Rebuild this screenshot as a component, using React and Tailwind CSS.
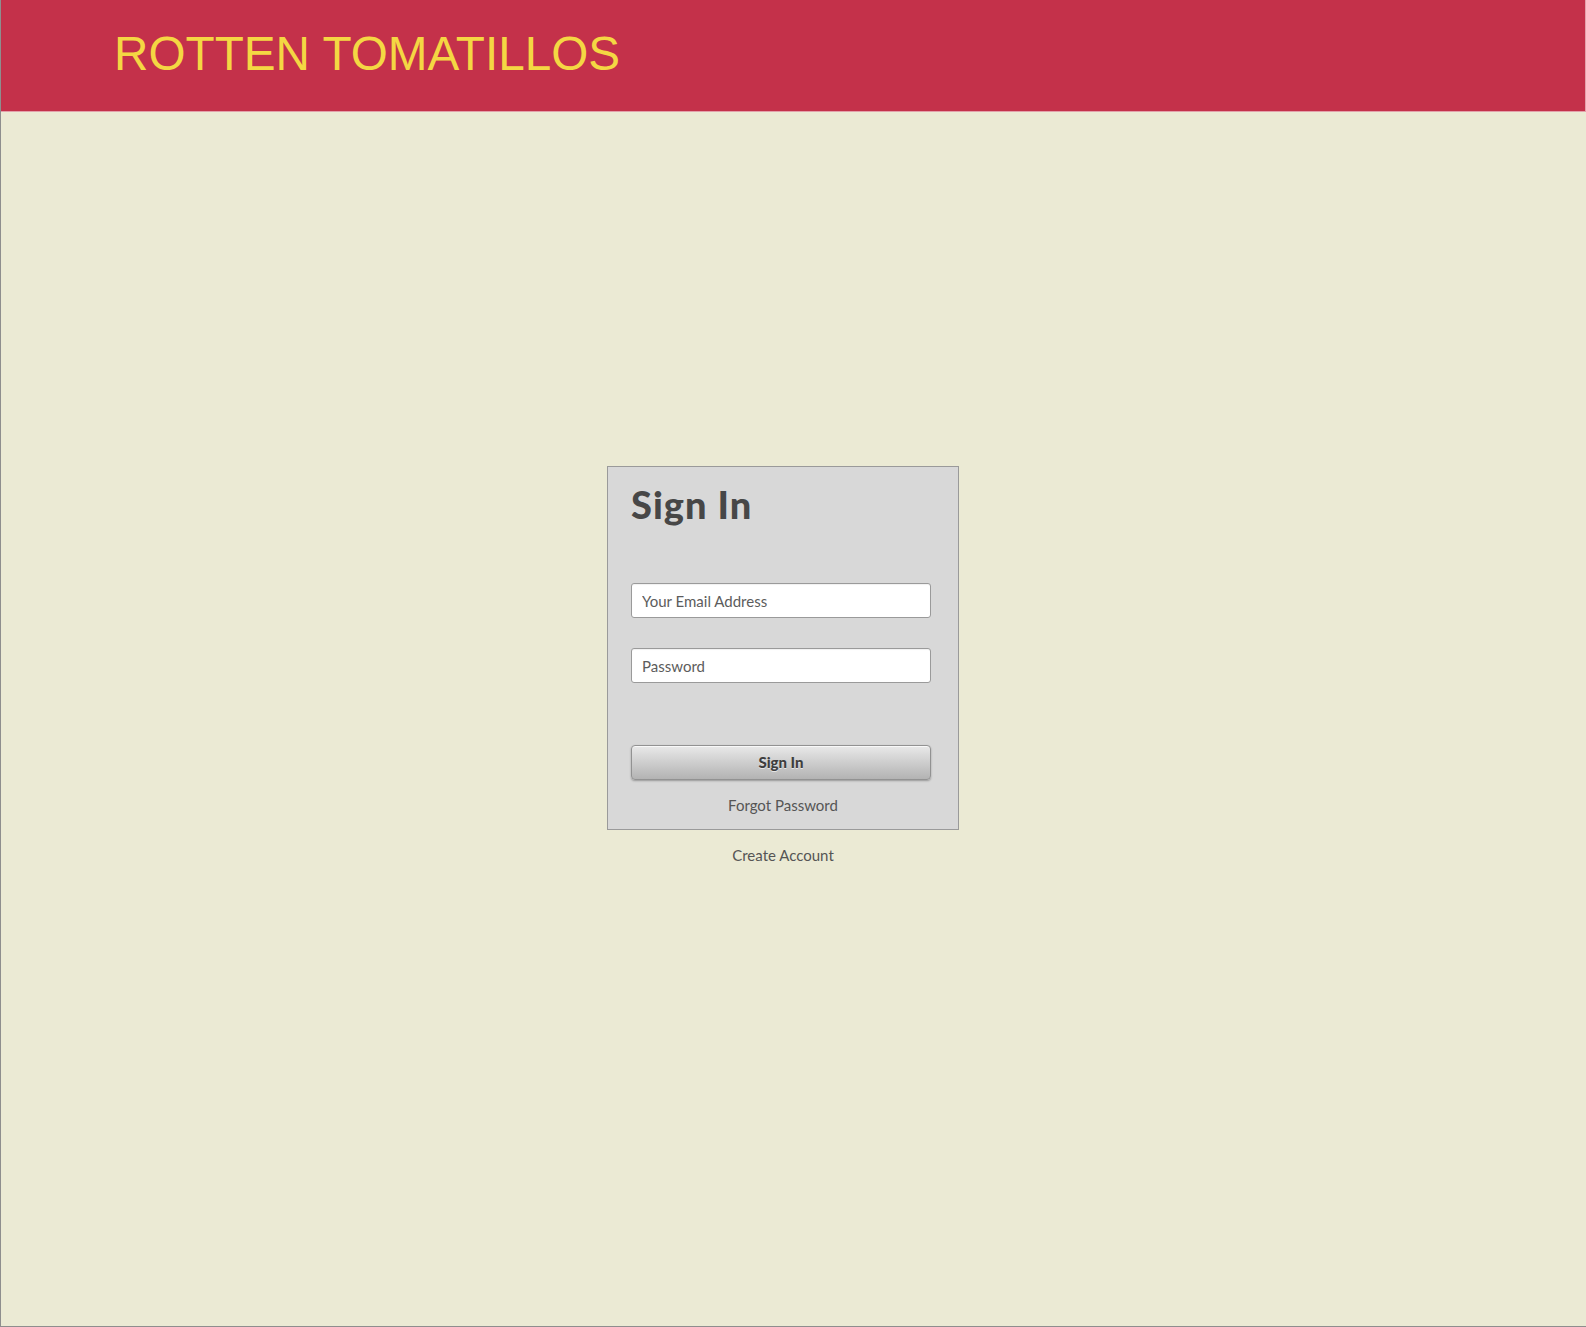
import React from 'react';

/**
 * Rotten Tomatillos sign-in page: red banner on top, grey card centred on a cream page.
 */
function TextField({ placeholder, type = 'text' }) {
  return (
    <input
      type={type}
      placeholder={placeholder}
      className="block w-[300px] h-[35px] px-[10px] bg-white border border-[#9a9a9a] rounded-[3px] text-[15px] text-[#444] placeholder:text-[#5c5c5c] outline-none shadow-[inset_0_1px_1px_rgba(0,0,0,0.06)]"
    />
  );
}

export default function App() {
  return (
    <div
      className="w-[1586px] h-[1327px] flex flex-col bg-[#ebead4] border-l border-b border-[#8e8e8e]"
      style={{ fontFamily: 'Lato, "Open Sans", sans-serif' }}
    >
      {/* Banner */}
      <header className="h-[112px] shrink-0 bg-[#c4314a] border-b border-r border-[#e3a1ab] pl-[113px] pt-[26px]">
        <h1
          className="text-[47.7px] leading-[55px] text-[#f4d743] font-normal"
          style={{ fontFamily: '"Liberation Sans", Arial, sans-serif' }}
        >
          ROTTEN TOMATILLOS
        </h1>
      </header>

      {/* Sign-in area */}
      <main className="flex-1 flex flex-col items-center pt-[354px] pr-[21px]">
        <div className="w-[352px] bg-[#d8d8d8] border border-[#9a9a9a] px-[23px] pt-[15px] pb-[14px]">
          <h2 className="text-[38px] leading-[44px] font-black tracking-[1px] text-[#474747]">Sign In</h2>

          <div className="mt-[57px] flex flex-col gap-[30px]">
            <TextField placeholder="Your Email Address" type="email" />
            <TextField placeholder="Password" type="password" />
          </div>

          <button
            type="button"
            className="mt-[62px] w-[300px] h-[35px] rounded-[4px] border border-[#929292] bg-gradient-to-b from-[#e9e9e9] to-[#b3b3b3] shadow-[0_1px_2px_rgba(0,0,0,0.3),inset_0_1px_0_rgba(255,255,255,0.7)] text-[15px] font-black text-[#3e3e3e] [text-shadow:0_1px_0_rgba(255,255,255,0.6)]"
          >
            Sign In
          </button>

          <div className="mt-[15px] text-center text-[15px] leading-[20px] text-[#555]">
            Forgot Password
          </div>
        </div>

        <div className="mt-[15px] text-[15px] leading-[20px] text-[#555]">Create Account</div>
      </main>
    </div>
  );
}
